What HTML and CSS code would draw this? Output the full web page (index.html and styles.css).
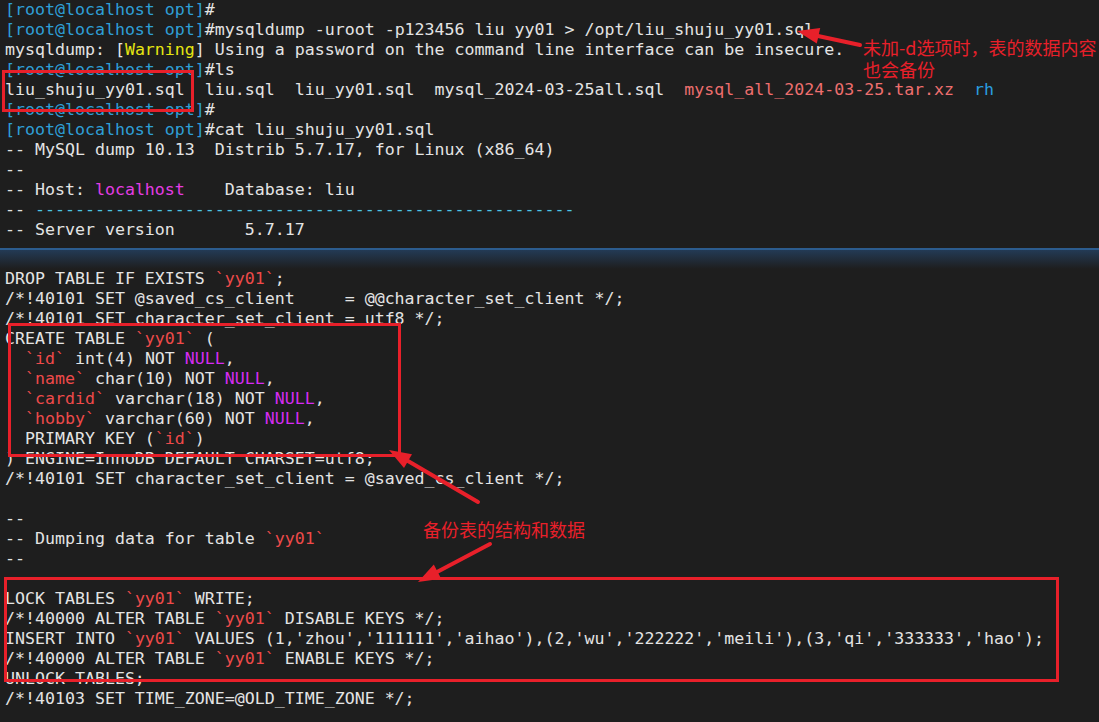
FILE: index.html
```html
<!DOCTYPE html>
<html>
<head>
	<title>mysqldump</title>
	<link rel="stylesheet" href="styles.css">
</head>
<body>
	<div class="term">
		<div class="ln"><span class="pr">[root@localhost opt]</span>#</div>
		<div class="ln"><span class="pr">[root@localhost opt]</span>#mysqldump -uroot -p123456 liu yy01 &gt; /opt/liu_shuju_yy01.sql</div>
		<div class="ln">mysqldump: [<span class="warn">Warning</span>] Using a password on the command line interface can be insecure.</div>
		<div class="ln"><span class="pr">[root@localhost opt]</span>#ls</div>
		<div class="ln">liu_shuju_yy01.sql  liu.sql  liu_yy01.sql  mysql_2024-03-25all.sql  <span class="arc">mysql_all_2024-03-25.tar.xz</span>  <span class="dir">rh</span></div>
		<div class="ln"><span class="pr">[root@localhost opt]</span>#</div>
		<div class="ln"><span class="pr">[root@localhost opt]</span>#cat liu_shuju_yy01.sql</div>
		<div class="ln">-- MySQL dump 10.13  Distrib 5.7.17, for Linux (x86_64)</div>
		<div class="ln">--</div>
		<div class="ln">-- Host: <span class="mag">localhost</span>    Database: liu</div>
		<div class="ln">-- <span class="cy">------------------------------------------------------</span></div>
		<div class="ln">-- Server version       5.7.17</div>
	</div>

	<div class="sep"></div>

	<div class="term">
		<div class="ln">DROP TABLE IF EXISTS <span class="id">`yy01`</span>;</div>
		<div class="ln">/*!40101 SET @saved_cs_client     = @@character_set_client */;</div>
		<div class="ln">/*!40101 SET character_set_client = utf8 */;</div>
		<div class="ln">CREATE TABLE <span class="id">`yy01`</span> (</div>
		<div class="ln">  <span class="id">`id`</span> int(4) NOT <span class="kw">NULL</span>,</div>
		<div class="ln">  <span class="id">`name`</span> char(10) NOT <span class="kw">NULL</span>,</div>
		<div class="ln">  <span class="id">`cardid`</span> varchar(18) NOT <span class="kw">NULL</span>,</div>
		<div class="ln">  <span class="id">`hobby`</span> varchar(60) NOT <span class="kw">NULL</span>,</div>
		<div class="ln">  PRIMARY KEY (<span class="id">`id`</span>)</div>
		<div class="ln">) ENGINE=InnoDB DEFAULT CHARSET=utf8;</div>
		<div class="ln">/*!40101 SET character_set_client = @saved_cs_client */;</div>
		<div class="ln"> </div>
		<div class="ln">--</div>
		<div class="ln">-- Dumping data for table <span class="id">`yy01`</span></div>
		<div class="ln">--</div>
		<div class="ln"> </div>
		<div class="ln">LOCK TABLES <span class="id">`yy01`</span> WRITE;</div>
		<div class="ln">/*!40000 ALTER TABLE <span class="id">`yy01`</span> DISABLE KEYS */;</div>
		<div class="ln">INSERT INTO <span class="id">`yy01`</span> VALUES (1,'zhou','111111','aihao'),(2,'wu','222222','meili'),(3,'qi','333333','hao');</div>
		<div class="ln">/*!40000 ALTER TABLE <span class="id">`yy01`</span> ENABLE KEYS */;</div>
		<div class="ln">UNLOCK TABLES;</div>
		<div class="ln">/*!40103 SET TIME_ZONE=@OLD_TIME_ZONE */;</div>
	</div>

	<!-- red markup drawn over the screenshot -->
	<svg class="marks" width="1099" height="722" viewBox="0 0 1099 722">
		<g fill="none" stroke="#e8202a" stroke-width="3">
			<rect x="3.5" y="71.5" width="189" height="39"/>
			<rect x="9.5" y="324.5" width="390" height="131"/>
			<rect x="5.5" y="578.5" width="1052" height="102"/>
		</g>
		<g stroke="#e8202a" stroke-width="4" stroke-linecap="round">
			<line x1="860" y1="45" x2="818" y2="36"/>
			<line x1="478" y1="502" x2="408" y2="461"/>
			<line x1="490" y1="544" x2="437" y2="572"/>
		</g>
		<g fill="#e8202a">
			<polygon points="797,31 820.2,28 816.8,43.6"/>
			<polygon points="389,450 412,454.2 404,468"/>
			<polygon points="418,582 433.8,564.6 441.2,578.8"/>
		</g>
	</svg>

	<div class="note note-top">未加-d选项时，表的数据内容</div>
	<div class="note note-top2">也会备份</div>
	<div class="note note-mid">备份表的结构和数据</div>
</body>
</html>
```

FILE: styles.css
```css
body {
	margin: 0;
	padding: 0;
	width: 1099px;
	height: 722px;
	overflow: hidden;
	position: relative;
	background-color: #1e1e1e;
	color: #e4e4e4;
	font-family: "DejaVu Sans Mono", "Liberation Mono", monospace;
	font-size: 16.6px;
}
.term {
	padding-left: 5px;
}
.ln {
	height: 20px;
	line-height: 20px;
	white-space: pre;
}
.pr {
	color: #2f9ed6;
}
.warn {
	color: #e5e512;
}
.arc {
	color: #ee6f6f;
}
.dir {
	color: #2a9ee0;
}
.mag {
	color: #e43ce4;
}
.cy {
	color: #4cc6e6;
}
.id {
	color: #ee4a4a;
}
.kw {
	color: #d52cf2;
}
.sep {
	margin-top: 8px;
	height: 19px;
	border-top: 2px solid #2c5c8e;
	background: linear-gradient(#233a55, #1e1e1e);
}
.marks {
	position: absolute;
	top: 0;
	left: 0;
	pointer-events: none;
}
.note {
	position: absolute;
	color: #e8202a;
	font-family: "Noto Sans CJK SC", "Noto Sans", sans-serif;
	font-size: 18px;
	line-height: 20px;
	white-space: nowrap;
}
.note-top {
	left: 863px;
	top: 37px;
}
.note-top2 {
	left: 863px;
	top: 59px;
}
.note-mid {
	left: 423px;
	top: 519px;
}
```
